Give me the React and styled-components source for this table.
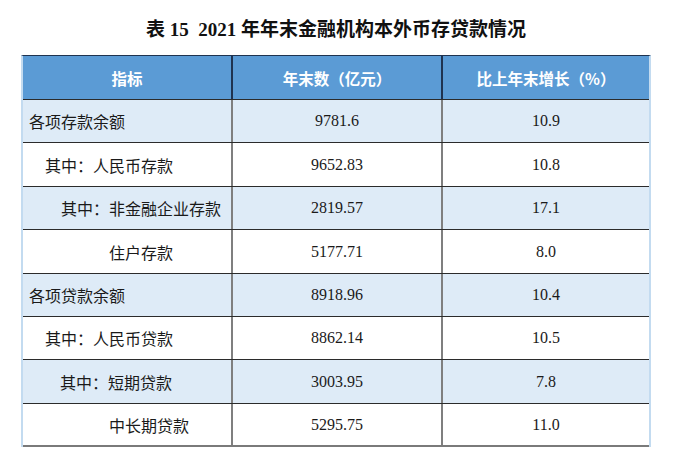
import styled, { createGlobalStyle } from "styled-components";

const GlobalStyle = createGlobalStyle`
  body {
    margin: 0;
    background: #ffffff;
    font-family: "Liberation Serif", "Noto Sans CJK SC", serif;
    color: #1a1a1a;
  }
`;

const Page = styled.div`
  width: 681px;
  padding: 0 0 0 21px;
  box-sizing: border-box;
`;

const Title = styled.h1`
  width: 630px;
  margin: 0;
  height: 55px;
  display: flex;
  align-items: center;
  justify-content: center;
  font-family: "Liberation Serif", "Noto Sans CJK SC", serif;
  font-size: 19px;
  font-weight: 700;
  color: #111;
  white-space: pre;
  padding-bottom: 1px;
  box-sizing: border-box;
`;

const Table = styled.div`
  width: 630px;
  border-top: 1.5px solid #1f3350;
  border-left: 2px solid #c3dbf0;
  border-right: 2px solid #c3dbf0;
  box-sizing: border-box;
`;

const Row = styled.div`
  display: grid;
  grid-template-columns: 208px 210px 1fr;
  height: ${(p) => p.h}px;
  box-sizing: border-box;
  background: ${(p) => (p.head ? "#5b9bd5" : p.shade ? "#deebf7" : "#ffffff")};
  border-bottom: ${(p) => (p.last ? "2px solid #7a7a7a" : "1.5px solid #2b2b2b")};
`;

const HeadCell = styled.div`
  display: flex;
  align-items: center;
  justify-content: center;
  font-family: "Noto Sans CJK SC", "Liberation Sans", sans-serif;
  font-size: 15.5px;
  font-weight: 700;
  color: #ffffff;
  border-left: ${(p) => (p.first ? "none" : "2px solid #1f3350")};
`;

const Cell = styled.div`
  display: flex;
  align-items: center;
  justify-content: ${(p) => (p.label ? "flex-start" : "center")};
  padding-left: ${(p) => (p.label ? p.indent : 0)}px;
  font-size: 16px;
  color: #1a1a1a;
  border-left: ${(p) => (p.label ? "none" : "2px solid #7f7f7f")};
`;

const rows = [
  { name: "各项存款余额", indent: 6, value: "9781.6", growth: "10.9" },
  { name: "其中：人民币存款", indent: 22, value: "9652.83", growth: "10.8" },
  { name: "其中：非金融企业存款", indent: 38, value: "2819.57", growth: "17.1" },
  { name: "住户存款", indent: 86, value: "5177.71", growth: "8.0" },
  { name: "各项贷款余额", indent: 6, value: "8918.96", growth: "10.4" },
  { name: "其中：人民币贷款", indent: 22, value: "8862.14", growth: "10.5" },
  { name: "其中：短期贷款", indent: 37, value: "3003.95", growth: "7.8" },
  { name: "中长期贷款", indent: 86, value: "5295.75", growth: "11.0" },
];

const heights = [43, 44, 43, 44, 43, 43, 44, 43];

const App = () => {
  return (
    <>
      <GlobalStyle />
      <Page>
        <Title>{"表 15  2021 年年末金融机构本外币存贷款情况"}</Title>
        <Table>
          <Row head h={44}>
            <HeadCell first>指标</HeadCell>
            <HeadCell>年末数（亿元）</HeadCell>
            <HeadCell>比上年末增长（%）</HeadCell>
          </Row>
          {rows.map((item, key) => {
            return (
              <Row
                key={key}
                h={heights[key]}
                shade={key % 2 === 0}
                last={key === rows.length - 1}
              >
                <Cell label indent={item.indent}>
                  {item.name}
                </Cell>
                <Cell>{item.value}</Cell>
                <Cell>{item.growth}</Cell>
              </Row>
            );
          })}
        </Table>
      </Page>
    </>
  );
};

export default App;
